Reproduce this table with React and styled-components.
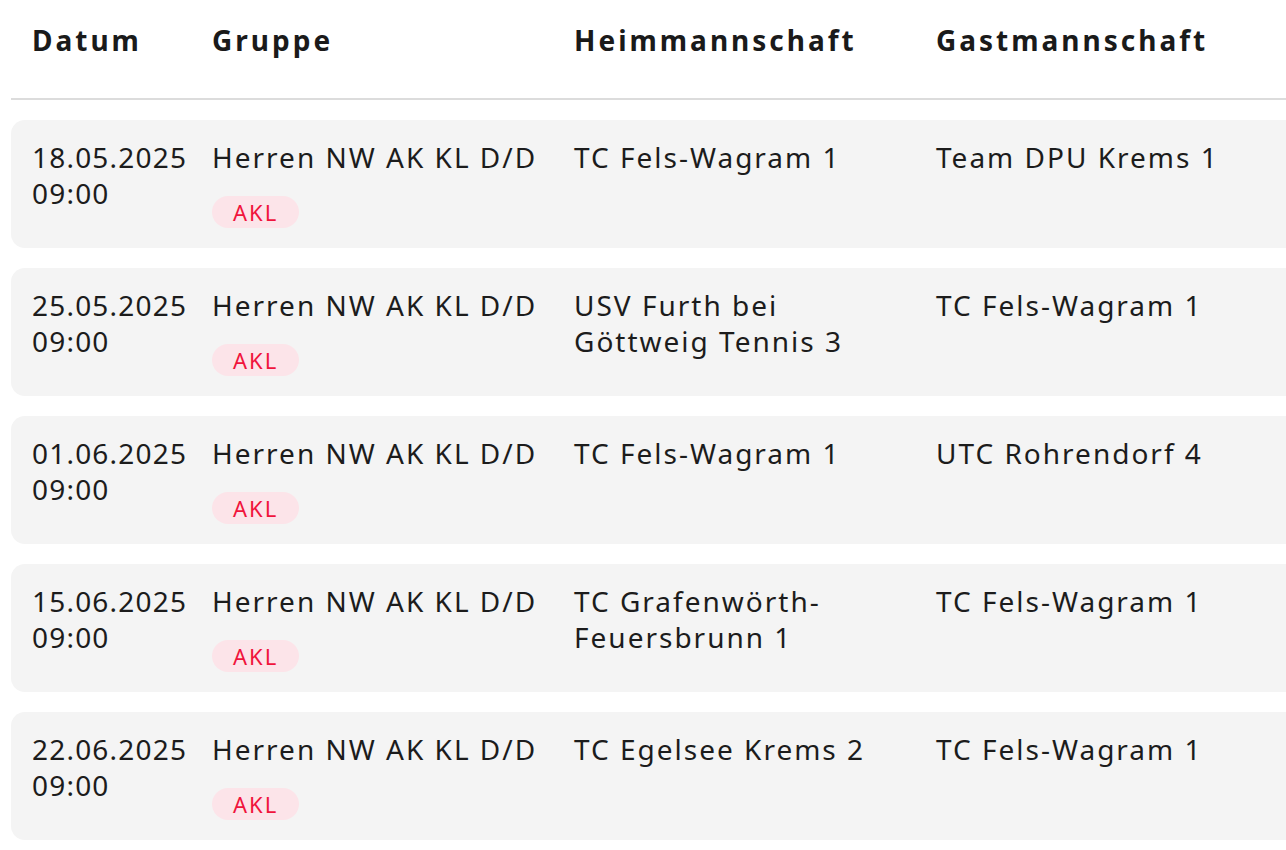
import React from 'react';
import styled, { createGlobalStyle } from 'styled-components';

const GlobalStyle = createGlobalStyle`
  html, body {
    margin: 0;
    padding: 0;
    background: #ffffff;
    overflow: hidden;
  }
  body {
    font-family: 'Noto Sans', 'Open Sans', sans-serif;
    color: #1c1c1c;
  }
`;

const Wrapper = styled.div`
  padding-left: 11px;
  width: 1500px;
`;

const Columns = styled.div`
  display: grid;
  grid-template-columns: 180px 362px 362px 362px 1fr;
`;

const HeaderRow = styled(Columns)`
  height: 100px;
  border-bottom: 2px solid #dcdcdc;
  box-sizing: border-box;
`;

const HeaderCell = styled.div`
  padding: 22px 8px 0 21px;
  font-size: 28px;
  line-height: 36px;
  font-weight: 700;
  letter-spacing: 3px;
  color: #1a1a1a;
`;

const Body = styled.div`
  display: flex;
  flex-direction: column;
  gap: 20px;
  padding-top: 20px;
`;

const Row = styled(Columns)`
  min-height: 128px;
  background: #f4f4f4;
  border-radius: 14px 0 0 14px;
`;

const Cell = styled.div`
  padding: 19px 8px 20px 21px;
  font-size: 28px;
  line-height: 36px;
  letter-spacing: ${({ $numeric }) => ($numeric ? '1.2px' : '2px')};
  color: #1c1c1c;
`;

const Badge = styled.span`
  display: inline-flex;
  align-items: center;
  height: 32px;
  margin-top: 21px;
  padding: 0 21px 0 21px;
  border-radius: 16px;
  background: #fce4e9;
  color: #f0143c;
  font-size: 22px;
  letter-spacing: 2px;
  line-height: 1;
`;

const matches = [
  { date: '18.05.2025', home: 'TC Fels-Wagram 1', guest: 'Team DPU Krems 1' },
  { date: '25.05.2025', home: 'USV Furth bei Göttweig Tennis 3', guest: 'TC Fels-Wagram 1' },
  { date: '01.06.2025', home: 'TC Fels-Wagram 1', guest: 'UTC Rohrendorf 4' },
  { date: '15.06.2025', home: 'TC Grafenwörth-Feuersbrunn 1', guest: 'TC Fels-Wagram 1' },
  { date: '22.06.2025', home: 'TC Egelsee Krems 2', guest: 'TC Fels-Wagram 1' },
];

const App = () => (
  <>
    <GlobalStyle />
    <Wrapper>
      <HeaderRow>
        <HeaderCell>Datum</HeaderCell>
        <HeaderCell>Gruppe</HeaderCell>
        <HeaderCell>Heimmannschaft</HeaderCell>
        <HeaderCell>Gastmannschaft</HeaderCell>
        <HeaderCell />
      </HeaderRow>
      <Body>
        {matches.map((m) => (
          <Row key={m.date}>
            <Cell $numeric>
              {m.date}
              <br />
              09:00
            </Cell>
            <Cell>
              Herren NW AK KL D/D
              <br />
              <Badge>AKL</Badge>
            </Cell>
            <Cell>{m.home}</Cell>
            <Cell>{m.guest}</Cell>
            <Cell />
          </Row>
        ))}
      </Body>
    </Wrapper>
  </>
);

export default App;
